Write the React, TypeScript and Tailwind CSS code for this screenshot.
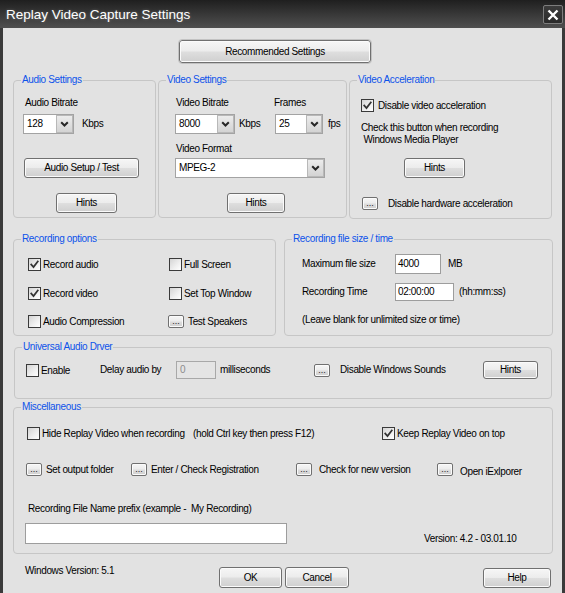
import React from "react";

// Vista-style push button with a glossy two-tone face
function Btn({ className = "", children }: { className?: string; children: React.ReactNode }) {
  return (
    <div
      className={`flex items-center justify-center shrink-0 rounded-[3px] border border-[#707070] bg-[linear-gradient(to_bottom,#f6f6f6_0%,#ececec_48%,#dedede_52%,#cfcfcf_100%)] shadow-[inset_0_0_0_1px_#fbfbfb] text-black ${className}`}
    >
      {children}
    </div>
  );
}

// Tiny "..." button
function Dots({ className = "" }: { className?: string }) {
  return (
    <div
      className={`flex items-end justify-center shrink-0 w-[16px] h-[13px] rounded-[2px] border border-[#707070] bg-[linear-gradient(to_bottom,#f6f6f6_0%,#ececec_48%,#dedede_52%,#cfcfcf_100%)] shadow-[inset_0_0_0_1px_#fbfbfb] text-[9px] leading-[9px] tracking-normal text-[#222] ${className}`}
    >
      <span className="pb-[1px]">...</span>
    </div>
  );
}

function Check({ on = false }: { on?: boolean }) {
  return (
    <div className="flex items-center justify-center shrink-0 w-[13px] h-[13px] border border-[#3a3a3a] bg-[linear-gradient(135deg,#d4d4d4_0%,#f0f0f0_60%,#ffffff_100%)]">
      {on && (
        <svg width="9" height="9" viewBox="0 0 9 9">
          <path d="M1.3 4.6 L3.5 7 L7.8 1.4" fill="none" stroke="#333" strokeWidth="1.8" strokeLinecap="square" />
        </svg>
      )}
    </div>
  );
}

function Combo({ value, className = "", btn = "w-[17px]" }: { value: string; className?: string; btn?: string }) {
  return (
    <div className={`flex h-[20px] shrink-0 border border-[#a3a3a3] bg-white ${className}`}>
      <div className="flex-1 flex items-center pl-[3px] text-black">{value}</div>
      <div
        className={`flex items-center justify-center h-full border border-[#b8b8b8] bg-[linear-gradient(to_bottom,#ececec,#d3d3d3)] ${btn}`}
      >
        <svg width="9" height="6" viewBox="0 0 9 6">
          <path d="M1.2 1.2 L4.5 4.5 L7.8 1.2" fill="none" stroke="#262626" strokeWidth="2" />
        </svg>
      </div>
    </div>
  );
}

function Field({ value = "", className = "" }: { value?: string; className?: string }) {
  return (
    <div className={`flex items-center shrink-0 border border-[#9d9d9d] bg-white pl-[2px] text-black ${className}`}>
      {value}
    </div>
  );
}

function Group({ title, className = "", children }: { title: string; className?: string; children?: React.ReactNode }) {
  return (
    <fieldset className={`shrink-0 border border-[#c6c6c6] rounded-[4px] ${className}`}>
      <legend className="ml-[7px] px-[1px] leading-[12px] text-[#0d52ea]">{title}</legend>
      {children}
    </fieldset>
  );
}

export default function App() {
  return (
    <div className="w-[565px] h-[593px] flex flex-col bg-[#3a3a3a] font-['Liberation_Sans',Arial,sans-serif] text-[10px] leading-[12px] tracking-[-0.35px] text-black overflow-hidden">
      {/* title bar */}
      <div className="h-[28px] shrink-0 flex items-center justify-between pl-[6px] pr-[2px] bg-[linear-gradient(to_bottom,#1f1f1f,#3a3a3a_55%,#4f4f4f)]">
        <span className="pt-[2px] text-[13.5px] leading-[16px] tracking-normal text-white [text-shadow:0_0_3px_rgba(255,255,255,0.25)]">
          Replay Video Capture Settings
        </span>
        <div className="flex items-center justify-center w-[20px] h-[19px] mt-[1px] rounded-[2px] border border-[#7d7d7d] bg-[linear-gradient(to_bottom,#3c3c3c,#2a2a2a)]">
          <svg width="12" height="12" viewBox="0 0 12 12">
            <path d="M1.5 1.5 L10.5 10.5 M10.5 1.5 L1.5 10.5" stroke="#fff" strokeWidth="2.4" />
          </svg>
        </div>
      </div>

      {/* dialog body */}
      <div className="flex-1 mx-[3px] bg-[#e2e2e2] flex flex-col">
        <Btn className="ml-[176px] mt-[12px] w-[192px] h-[23px] outline-1 outline-[#c2c2c2]">Recommended Settings</Btn>

        {/* audio / video / acceleration */}
        <div className="flex items-start ml-[10px] mt-[11px] gap-[2px]">
          <Group title="Audio Settings" className="w-[143px] h-[144px]">
            <div className="ml-[11px] mt-[11px]">Audio Bitrate</div>
            <div className="flex items-center ml-[9px] mt-[5px]">
              <Combo value="128" className="w-[51px]" />
              <span className="ml-[8px]">Kbps</span>
            </div>
            <Btn className="ml-[10px] mt-[24px] w-[115px] h-[20px]">Audio Setup / Test</Btn>
            <Btn className="ml-[42px] mt-[15px] w-[61px] h-[20px]">Hints</Btn>
          </Group>

          <Group title="Video Settings" className="w-[189px] h-[144px]">
            <div className="flex ml-[16px] mt-[11px]">
              <div className="w-[99px]">
                <div className="ml-[1px]">Video Bitrate</div>
                <div className="flex items-center mt-[5px]">
                  <Combo value="8000" className="w-[60px]" />
                  <span className="ml-[4px]">Kbps</span>
                </div>
              </div>
              <div>
                <div>Frames</div>
                <div className="flex items-center mt-[5px] ml-[1px]">
                  <Combo value="25" className="w-[48px]" btn="w-[16px]" />
                  <span className="ml-[5px]">fps</span>
                </div>
              </div>
            </div>
            <div className="ml-[17px] mt-[9px]">Video Format</div>
            <Combo value="MPEG-2" className="ml-[16px] mt-[3px] w-[150px]" />
            <Btn className="ml-[68px] mt-[15px] w-[58px] h-[20px]">Hints</Btn>
          </Group>

          <Group title="Video Acceleration" className="w-[203px] h-[145px]">
            <div className="flex items-center ml-[11px] mt-[13px]">
              <Check on />
              <span className="ml-[4px]">Disable video acceleration</span>
            </div>
            <div className="ml-[11px] mt-[10px] whitespace-pre">{"Check this button when recording\n Windows Media Player"}</div>
            <Btn className="ml-[54px] mt-[12px] w-[61px] h-[20px]">Hints</Btn>
            <div className="flex items-center ml-[12px] mt-[19px]">
              <Dots />
              <span className="ml-[10px]">Disable hardware acceleration</span>
            </div>
          </Group>
        </div>

        {/* recording options / file size */}
        <div className="flex items-start ml-[10px] mt-[14px]">
          <Group title="Recording options" className="w-[263px] h-[103px]">
            <div className="flex items-center ml-[14px] mt-[13px] h-[13px]">
              <div className="w-[141px] flex items-center">
                <Check on />
                <span className="ml-[2px]">Record audio</span>
              </div>
              <div className="flex items-center">
                <Check />
                <span className="ml-[2px]">Full Screen</span>
              </div>
            </div>
            <div className="flex items-center ml-[14px] mt-[16px] h-[13px]">
              <div className="w-[141px] flex items-center">
                <Check on />
                <span className="ml-[2px]">Record video</span>
              </div>
              <div className="flex items-center">
                <Check />
                <span className="ml-[2px]">Set Top Window</span>
              </div>
            </div>
            <div className="flex items-center ml-[14px] mt-[15px] h-[13px]">
              <div className="w-[140px] flex items-center">
                <Check />
                <span className="ml-[2px]">Audio Compression</span>
              </div>
              <div className="flex items-center">
                <Dots />
                <span className="ml-[4px]">Test Speakers</span>
              </div>
            </div>
          </Group>

          <Group title="Recording file size / time" className="ml-[8px] w-[269px] h-[103px]">
            <div className="flex items-center ml-[17px] mt-[9px]">
              <span className="w-[93px]">Maximum file size</span>
              <Field value="4000" className="w-[46px] h-[20px]" />
              <span className="ml-[7px]">MB</span>
            </div>
            <div className="flex items-center ml-[17px] mt-[9px]">
              <span className="w-[93px]">Recording Time</span>
              <Field value="02:00:00" className="w-[59px] h-[18px]" />
              <span className="ml-[5px]">(hh:mm:ss)</span>
            </div>
            <div className="ml-[17px] mt-[13px]">(Leave blank for unlimited size or time)</div>
          </Group>
        </div>

        {/* universal audio driver */}
        <Group title="Universal Audio Drver" className="ml-[11px] mt-[5px] w-[538px] h-[58px]">
          <div className="flex items-center ml-[11px] mt-[8px] h-[18px]">
            <div className="w-[74px] flex items-center">
              <Check />
              <span className="ml-[2px] mt-[1px]">Enable</span>
            </div>
            <span className="w-[76px]">Delay audio by</span>
            <div className="flex items-center shrink-0 w-[40px] h-[18px] border border-[#a8a8a8] bg-[#e4e4e4] pl-[3px] text-[#8c8c8c]">0</div>
            <span className="ml-[4px] w-[94px]">milliseconds</span>
            <Dots />
            <span className="ml-[10px] w-[143px]">Disable Windows Sounds</span>
            <Btn className="w-[55px] h-[18px]">Hints</Btn>
          </div>
        </Group>

        {/* miscellaneous */}
        <Group title="Miscellaneous" className="ml-[10px] mt-[2px] w-[540px] h-[153px]">
          <div className="flex items-center ml-[13px] mt-[14px] h-[13px]">
            <div className="w-[166px] flex items-center">
              <Check />
              <span className="ml-[2px]">Hide Replay Video when recording</span>
            </div>
            <span className="w-[189px]">(hold Ctrl key then press F12)</span>
            <div className="flex items-center">
              <Check on />
              <span className="ml-[2px]">Keep Replay Video on top</span>
            </div>
          </div>
          <div className="flex items-center ml-[12px] mt-[23px] h-[13px]">
            <div className="w-[105px] flex items-center">
              <Dots />
              <span className="ml-[4px]">Set output folder</span>
            </div>
            <div className="w-[165px] flex items-center">
              <Dots />
              <span className="ml-[4px]">Enter / Check Registration</span>
            </div>
            <div className="w-[141px] flex items-center">
              <Dots />
              <span className="ml-[7px]">Check for new version</span>
            </div>
            <div className="flex items-center">
              <Dots />
              <span className="ml-[7px] mt-[5px]">Open iExlporer</span>
            </div>
          </div>
          <div className="ml-[14px] mt-[27px] whitespace-pre">Recording File Name prefix (example -  My Recording)</div>
          <div className="flex items-start ml-[11px] mt-[8px]">
            <Field className="w-[262px] h-[21px]" />
            <span className="ml-[137px] mt-[10px]">Version: 4.2 - 03.01.10</span>
          </div>
        </Group>

        {/* footer */}
        <div className="flex items-start ml-[22px] mt-[11px]">
          <span className="w-[194px]">Windows Version: 5.1</span>
          <Btn className="mt-[2px] w-[63px] h-[21px]">OK</Btn>
          <Btn className="ml-[3px] mt-[2px] w-[64px] h-[21px]">Cancel</Btn>
          <Btn className="ml-[134px] mt-[3px] w-[68px] h-[20px]">Help</Btn>
        </div>
      </div>
    </div>
  );
}
